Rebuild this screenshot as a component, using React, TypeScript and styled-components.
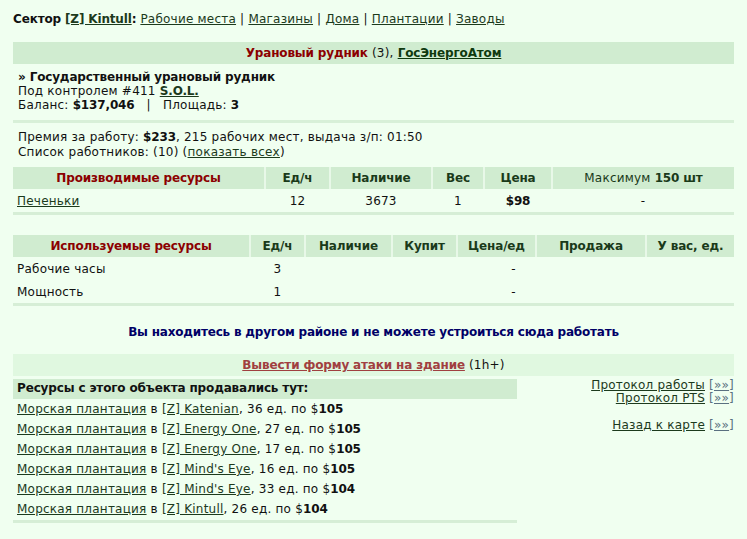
import React from "react"
import styled, { createGlobalStyle } from "styled-components"

const GlobalStyle = createGlobalStyle`
  html, body {
    margin: 0;
    padding: 0;
    background: #f0fff0;
  }
  body {
    font-family: "DejaVu Sans", Verdana, sans-serif;
    font-size: 12px;
    letter-spacing: 0.22px;
    color: #111;
  }
  b, th {
    letter-spacing: -0.15px;
  }
`

const Page = styled.div`
  width: 721px;
  padding: 12px 13px 0 13px;
`

const Link = styled.a<{ $bold?: boolean; $color?: string }>`
  color: ${(p) => p.$color ?? "#1c3a1c"};
  text-decoration: underline;
  font-weight: ${(p) => (p.$bold ? "bold" : "normal")};
  letter-spacing: ${(p) => (p.$bold ? "-0.15px" : "inherit")};
  cursor: pointer;
`

const Nav = styled.div`
  line-height: 15px;
  margin-bottom: 15px;
`

const TitleBar = styled.div`
  height: 22px;
  line-height: 22px;
  background: #d0ecd0;
  text-align: center;
`

const Red = styled.b`
  color: #8b0000;
`

const InfoBlock = styled.div`
  padding: 6px 5px 8px 5px;
  line-height: 14px;
  border-bottom: 3px solid #d8f0d8;
`

const Premium = styled.div`
  padding: 7px 5px 7px 5px;
  line-height: 15px;
`

const Table = styled.table<{ $mb: number }>`
  width: 100%;
  border-collapse: collapse;
  border-bottom: 3px solid #d6eed6;
  margin-bottom: ${(p) => p.$mb}px;
`

const Th = styled.th<{ $w?: number; $red?: boolean }>`
  background: #d0ecd0;
  height: 22px;
  padding: 0 4px;
  font-weight: bold;
  color: ${(p) => (p.$red ? "#8b0000" : "#1a3a1a")};
  width: ${(p) => (p.$w ? `${p.$w}px` : "auto")};
  text-align: center;
  & + & {
    border-left: 2px solid #e8f8e8;
  }
`

const Td = styled.td<{ $align?: string }>`
  height: 23px;
  padding: 0 4px;
  text-align: ${(p) => p.$align ?? "center"};
`

const Message = styled.div`
  text-align: center;
  font-weight: bold;
  letter-spacing: -0.2px;
  color: #000066;
  line-height: 15px;
  margin-bottom: 14px;
`

const AttackBar = styled.div`
  height: 22px;
  line-height: 22px;
  background: #e0f8e0;
  text-align: center;
`

const Bottom = styled.div`
  display: flex;
  justify-content: space-between;
  margin-top: 3px;
`

const SalesBox = styled.div`
  width: 504px;
  border-bottom: 3px solid #d6eed6;
  padding-bottom: 1px;
`

const SalesHead = styled.div`
  background: #d0ecd0;
  height: 20px;
  line-height: 19px;
  padding-left: 4px;
  font-weight: bold;
  letter-spacing: -0.15px;
  color: #111;
`

const SalesRow = styled.div`
  line-height: 20px;
  padding-left: 4px;
`

const SideLinks = styled.div`
  text-align: right;
  line-height: 13px;
`

const Spacer = styled.div`
  height: 14px;
`

const Arrows = styled.span`
  color: #5a7080;
  a {
    color: #5a7080;
  }
`

const sales = [
  { city: "[Z] Katenian", qty: 36, price: 105 },
  { city: "[Z] Energy One", qty: 27, price: 105 },
  { city: "[Z] Energy One", qty: 17, price: 105 },
  { city: "[Z] Mind's Eye", qty: 16, price: 105 },
  { city: "[Z] Mind's Eye", qty: 33, price: 104 },
  { city: "[Z] Kintull", qty: 26, price: 104 },
]

const More = () => (
  <Arrows>
    [<Link>»»</Link>]
  </Arrows>
)

export default function App() {
  return (
    <Page>
      <GlobalStyle />
      <Nav>
        <b>
          Сектор <Link $bold>[Z] Kintull</Link>:
        </b>{" "}
        <Link>Рабочие места</Link> | <Link>Магазины</Link> | <Link>Дома</Link> |{" "}
        <Link>Плантации</Link> | <Link>Заводы</Link>
      </Nav>

      <TitleBar>
        <Red>Урановый рудник</Red> (3), <Link $bold $color="#0f3a0f">ГосЭнергоАтом</Link>
      </TitleBar>

      <InfoBlock>
        <b>» Государственный урановый рудник</b>
        <br />
        Под контролем #411 <Link $bold>S.O.L.</Link>
        <br />
        Баланс: <b>$137,046</b> &nbsp; | &nbsp; Площадь: <b>3</b>
      </InfoBlock>

      <Premium>
        Премия за работу: <b>$233</b>, 215 рабочих мест, выдача з/п: 01:50
        <br />
        Список работников: (10) (<Link>показать всех</Link>)
      </Premium>

      <Table $mb={20}>
        <thead>
          <tr>
            <Th $w={243} $red>Производимые ресурсы</Th>
            <Th $w={55}>Ед/ч</Th>
            <Th $w={92}>Наличие</Th>
            <Th $w={42}>Вес</Th>
            <Th $w={58}>Цена</Th>
            <Th>
              <span style={{ fontWeight: "normal", letterSpacing: "0.22px" }}>Максимум</span> 150 шт
            </Th>
          </tr>
        </thead>
        <tbody>
          <tr>
            <Td $align="left">
              <Link>Печеньки</Link>
            </Td>
            <Td>12</Td>
            <Td>3673</Td>
            <Td>1</Td>
            <Td>
              <b>$98</b>
            </Td>
            <Td>-</Td>
          </tr>
        </tbody>
      </Table>

      <Table $mb={19}>
        <thead>
          <tr>
            <Th $w={228} $red>Используемые ресурсы</Th>
            <Th $w={45}>Ед/ч</Th>
            <Th $w={77}>Наличие</Th>
            <Th $w={55}>Купит</Th>
            <Th $w={69}>Цена/ед</Th>
            <Th $w={100}>Продажа</Th>
            <Th>У вас, ед.</Th>
          </tr>
        </thead>
        <tbody>
          <tr>
            <Td $align="left">Рабочие часы</Td>
            <Td>3</Td>
            <Td />
            <Td />
            <Td $align="right">-&nbsp;&nbsp;&nbsp;&nbsp;</Td>
            <Td />
            <Td />
          </tr>
          <tr>
            <Td $align="left">Мощность</Td>
            <Td>1</Td>
            <Td />
            <Td />
            <Td $align="right">-&nbsp;&nbsp;&nbsp;&nbsp;</Td>
            <Td />
            <Td />
          </tr>
        </tbody>
      </Table>

      <Message>Вы находитесь в другом районе и не можете устроиться сюда работать</Message>

      <AttackBar>
        <Link $bold $color="#a04040">
          Вывести форму атаки на здание
        </Link>{" "}
        (1h+)
      </AttackBar>

      <Bottom>
        <SalesBox>
          <SalesHead>Ресурсы с этого объекта продавались тут:</SalesHead>
          {sales.map((s, i) => (
            <SalesRow key={i}>
              <Link>Морская плантация</Link> в <Link>{s.city}</Link>, {s.qty} ед. по $
              <b>{s.price}</b>
            </SalesRow>
          ))}
        </SalesBox>
        <SideLinks>
          <Link>Протокол работы</Link> <More />
          <br />
          <Link>Протокол PTS</Link> <More />
          <Spacer />
          <Link>Назад к карте</Link> <More />
        </SideLinks>
      </Bottom>
    </Page>
  )
}
